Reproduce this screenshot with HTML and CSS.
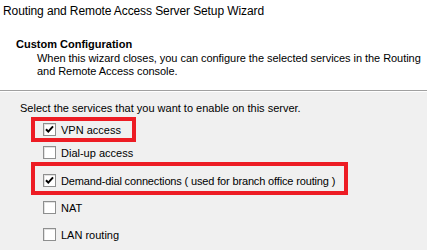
FILE: index.html
```html
<!DOCTYPE html>
<html lang="en">
<head>
  <meta charset="UTF-8">
  <title>Routing and Remote Access Server Setup Wizard</title>
  <link rel="stylesheet" href="styles.css">
</head>
<body>
  <div class="header">
    <div class="title">Routing and Remote Access Server Setup Wizard</div>
    <h1>Custom Configuration</h1>
    <p class="desc">When this wizard closes, you can configure the selected services in the Routing<br>and Remote Access console.</p>
  </div>

  <div class="content">
    <p class="prompt">Select the services that you want to enable on this server.</p>

    <div class="mark mark-vpn">
      <label class="opt">
        <span class="box">
          <svg width="11" height="11" viewBox="0 0 11 11"><path d="M2 5.2 L4.3 7.6 L9 2.4" fill="none" stroke="#000" stroke-width="2"/></svg>
        </span>
        VPN access
      </label>
    </div>

    <label class="opt plain dial">
      <span class="box"></span>
      Dial-up access
    </label>

    <div class="mark mark-demand">
      <label class="opt tight">
        <span class="box">
          <svg width="11" height="11" viewBox="0 0 11 11"><path d="M2 5.2 L4.3 7.6 L9 2.4" fill="none" stroke="#000" stroke-width="2"/></svg>
        </span>
        Demand-dial connections ( used for branch office routing )
      </label>
    </div>

    <label class="opt plain nat">
      <span class="box"></span>
      NAT
    </label>

    <label class="opt plain lan">
      <span class="box"></span>
      LAN routing
    </label>
  </div>
</body>
</html>
```

FILE: styles.css
```css
* {
  margin: 0;
  padding: 0;
  box-sizing: border-box;
}

body {
  font-family: 'Liberation Sans', Arial, sans-serif;
  font-size: 11px;
  color: #000;
  background: #f0f0f0;
  width: 427px;
  height: 250px;
  overflow: hidden;
}

.header {
  background: #fff;
  height: 91px;
  border-bottom: 1px solid #a0a0a0;
  box-shadow: 0 1px 0 #fff;
  white-space: nowrap;
}

.title {
  font-size: 12px;
  line-height: 14px;
  padding: 4px 3px 0;
  letter-spacing: -0.1px;
}

h1 {
  font-size: 11px;
  line-height: 13px;
  font-weight: bold;
  margin-top: 20px;
  padding-left: 16px;
}

.desc {
  line-height: 13px;
  margin-top: 1px;
  padding-left: 37px;
  letter-spacing: -0.05px;
}

.content {
  white-space: nowrap;
}

.prompt {
  line-height: 13px;
  margin-top: 11px;
  padding-left: 20px;
}

.opt {
  display: flex;
  align-items: center;
  height: 17px;
}

.tight {
  letter-spacing: -0.15px;
}

.box {
  width: 13px;
  height: 13px;
  border: 1px solid #8e8f8f;
  background: #fff;
  box-shadow: inset 1px 1px 0 #e2e2e2;
  margin-right: 5px;
  display: flex;
  align-items: center;
  justify-content: center;
  letter-spacing: 0;
}

.mark {
  width: fit-content;
  border: 4px solid #ed1c24;
  margin-left: 31px;
}

.mark-vpn {
  margin-top: 2px;
  padding: 0 11px 0 8px;
}

.mark-demand {
  margin-top: 1px;
  padding: 6px 9px 2px 8px;
}

.plain {
  margin-left: 43px;
}

.dial {
  margin-top: 2px;
}

.nat {
  margin-top: 4px;
}

.lan {
  margin-top: 10px;
}
```
